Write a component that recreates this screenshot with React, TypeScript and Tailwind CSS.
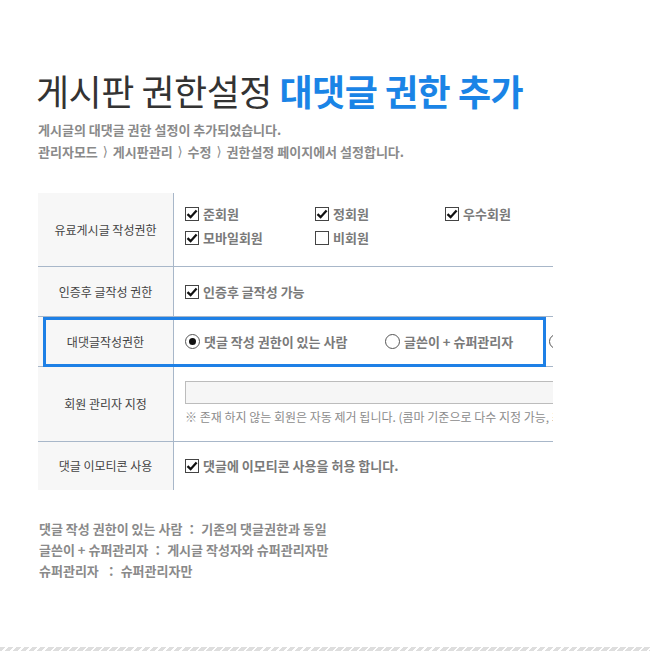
import React from 'react';

const font = { fontFamily: '"Noto Sans CJK KR", "Noto Sans", sans-serif' };

function CheckBox({ checked }: { checked: boolean }) {
  return (
    <span className="inline-flex w-[14px] h-[14px] border border-[#444] bg-white items-center justify-center shrink-0">
      {checked && (
        <svg width="12" height="12" viewBox="0 0 12 12">
          <path d="M1.5 6.2 L4.6 9.2 L10.6 2.6" fill="none" stroke="#111" strokeWidth="2.3" />
        </svg>
      )}
    </span>
  );
}

function Radio({ checked }: { checked: boolean }) {
  return (
    <span className="inline-flex w-[15px] h-[15px] rounded-full border border-[#555] bg-white items-center justify-center shrink-0">
      {checked && <span className="w-[7px] h-[7px] rounded-full bg-[#111]" />}
    </span>
  );
}

function Check({ label, checked }: { label: string; checked: boolean }) {
  return (
    <div className="flex items-center gap-[4px] h-[24px]">
      <CheckBox checked={checked} />
      <span className="text-[13px] font-bold text-[#7a7a7a]">{label}</span>
    </div>
  );
}

function Row({ label, height, last, children }: { label: string; height: string; last?: boolean; children: React.ReactNode }) {
  return (
    <div className={`flex ${height} ${last ? '' : 'border-b border-[#a8b7c9]'}`}>
      <div className="w-[136px] shrink-0 bg-[#f7f7f7] border-r border-[#a8b7c9] flex items-center justify-center text-[12px] text-[#444]">
        {label}
      </div>
      <div className="flex-1 pl-[11px] flex flex-col justify-center whitespace-nowrap">{children}</div>
    </div>
  );
}

// narrow breadcrumb arrow
const Arrow = () => (
  <span className="inline-block align-top h-[22px] leading-[22px] px-[2px] font-['DejaVu_Sans'] font-normal">⟩</span>
);

export default function App() {
  return (
    <div className="w-[650px] h-[654px] bg-white flex flex-col overflow-hidden" style={font}>
      <div className="pt-[70px] pl-[36px]">
        <h1 className="text-[36px] leading-[40px] tracking-[-0.5px] text-[#333] font-normal whitespace-nowrap">
          게시판 권한설정 <span className="font-bold text-[#1a84e6]">대댓글 권한 추가</span>
        </h1>
      </div>

      <div className="pl-[38px] mt-[9px] text-[13px] leading-[22px] font-bold text-[#8a8a8a]">
        <p className="h-[22px]">게시글의 대댓글 권한 설정이 추가되었습니다.</p>
        <p className="h-[22px]">
          관리자모드 <Arrow /> 게시판관리 <Arrow /> 수정 <Arrow /> 권한설정 페이지에서 설정합니다.
        </p>
      </div>

      <div className="ml-[38px] mt-[30px] w-[515px] relative">
        <div className="overflow-hidden">
          <Row label="유료게시글 작성권한" height="h-[74px]">
            <div className="grid grid-cols-[130px_130px_130px] mt-[-8px]">
              <Check label="준회원" checked />
              <Check label="정회원" checked />
              <Check label="우수회원" checked />
              <Check label="모바일회원" checked />
              <Check label="비회원" checked={false} />
            </div>
          </Row>
          <Row label="인증후 글작성 권한" height="h-[50px]">
            <Check label="인증후 글작성 가능" checked />
          </Row>
          <Row label="대댓글작성권한" height="h-[50px]">
            <div className="flex items-center">
              <div className="flex items-center gap-[4px] w-[200px]">
                <Radio checked />
                <span className="text-[13px] font-bold text-[#7a7a7a]">댓글 작성 권한이 있는 사람</span>
              </div>
              <div className="flex items-center gap-[4px] w-[164px]">
                <Radio checked={false} />
                <span className="text-[13px] font-bold text-[#7a7a7a]">글쓴이 + 슈퍼관리자</span>
              </div>
              <div className="flex items-center gap-[4px]">
                <Radio checked={false} />
                <span className="text-[13px] font-bold text-[#7a7a7a]">슈퍼관리자</span>
              </div>
            </div>
          </Row>
          <Row label="회원 관리자 지정" height="h-[75px]">
            <div className="h-[23px] border border-[#bcbcbc] bg-[#f6f6f6] w-[400px] mt-[-3px]" />
            <p className="text-[12px] text-[#8c8c8c] mt-[5px] leading-[16px]">
              ※ 존재 하지 않는 회원은 자동 제거 됩니다. (콤마 기준으로 다수 지정 가능, 최대 10명)
            </p>
          </Row>
          <Row label="댓글 이모티콘 사용" height="h-[48px]" last>
            <Check label="댓글에 이모티콘 사용을 허용 합니다." checked />
          </Row>
        </div>
        <div className="absolute left-[5px] top-[124px] w-[503px] h-[50px] border-[3px] border-[#1e80e6]" />
      </div>

      <div className="pl-[39px] mt-[28px] text-[13px] leading-[21px] font-bold text-[#8a8a8a]">
        <p>댓글 작성 권한이 있는 사람 ： 기존의 댓글권한과 동일</p>
        <p>글쓴이 + 슈퍼관리자 ： 게시글 작성자와 슈퍼관리자만</p>
        <p>슈퍼관리자 &nbsp;： 슈퍼관리자만</p>
      </div>

      <div className="mt-auto mb-[3px] h-[4px] bg-[repeating-linear-gradient(135deg,#dedede_0px,#dedede_4px,transparent_4px,transparent_5.7px)]" />
    </div>
  );
}
